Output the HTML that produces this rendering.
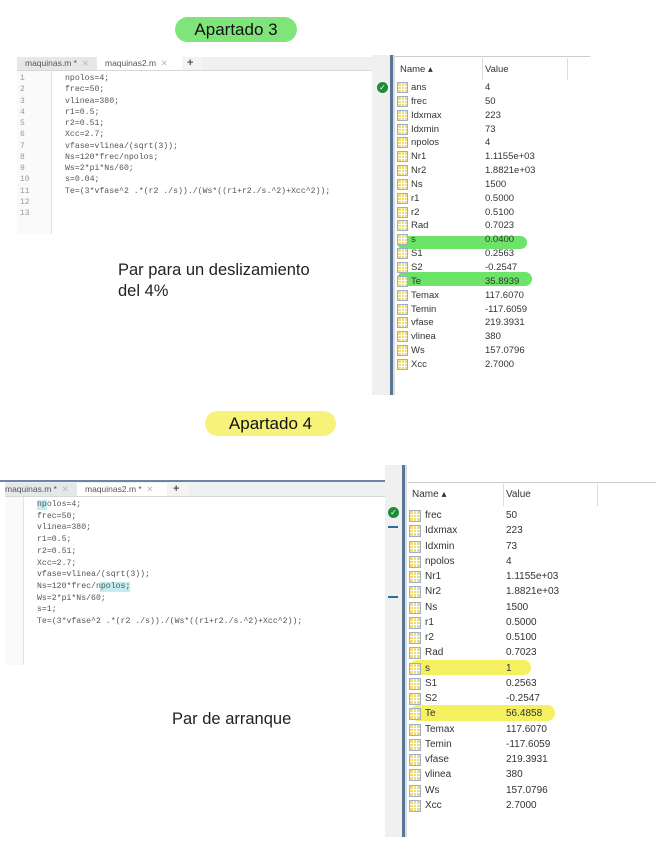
<!DOCTYPE html>
<html><head><meta charset="utf-8"><style>
*{margin:0;padding:0;box-sizing:border-box}
body{width:656px;height:848px;background:#fff;position:relative;overflow:hidden;font-family:"Liberation Sans",sans-serif}
.abs{position:absolute}
.pill{position:absolute;border-radius:14px;font-size:17px;color:#111;text-align:center}
.code{position:absolute;font-family:"Liberation Mono",monospace;font-size:8.2px;color:#555;white-space:pre}
.ln{position:absolute;font-family:"Liberation Mono",monospace;font-size:8px;color:#999;white-space:pre}
.tab{position:absolute;font-size:8.5px;color:#555;height:13px;line-height:13px;padding-left:8px}
.ws{position:absolute;font-size:9.5px;color:#333}
.row{position:relative;white-space:nowrap}
.ic{position:absolute;left:0;width:11px;height:11px;background:#f1dc7c;border:1px solid #9fb0c4;
background-image:linear-gradient(90deg,transparent 3px,#fff 3px,#fff 4px,transparent 4px,transparent 6px,#fff 6px,#fff 7px,transparent 7px),linear-gradient(180deg,transparent 3px,#fff 3px,#fff 4px,transparent 4px,transparent 6px,#fff 6px,#fff 7px,transparent 7px)}
.nm{position:absolute;left:14px}
.vl{position:absolute}
.chk{position:absolute;width:11px;height:11px;border-radius:50%;background:#1e8a3a;color:#fff;font-size:8px;line-height:11px;text-align:center}
</style></head><body>

<div class="pill" style="left:175px;top:17px;width:122px;height:25px;line-height:25px;background:#7fe57a">Apartado 3</div>

<div class="abs" style="left:17px;top:57px;width:358px;height:14px;background:#eef0f2;border-bottom:1px solid #d8d8d8"></div>
<div class="tab" style="left:17px;top:57px;width:80px;background:#e6e7e9">maquinas.m * &nbsp;<span style="color:#bbb">✕</span></div>
<div class="tab" style="left:97px;top:57px;width:85px;background:#fff">maquinas2.m &nbsp;<span style="color:#bbb">✕</span></div>
<div class="tab" style="left:182px;top:57px;width:20px;background:#f4f4f4;font-weight:bold;font-size:11px;padding-left:5px">+</div>
<div class="abs" style="left:17px;top:71px;width:35px;height:163px;background:#fafafa;border-right:1px solid #e2e2e2"></div>
<div class="ln" style="left:20px;top:73px;line-height:11.25px">1
2
3
4
5
6
7
8
9
10
11
12
13</div>
<div class="code" style="left:65px;top:73px;line-height:11.25px">npolos=4;
frec=50;
vlinea=380;
r1=0.5;
r2=0.51;
Xcc=2.7;
vfase=vlinea/(sqrt(3));
Ns=120*frec/npolos;
Ws=2*pi*Ns/60;
s=0.04;
Te=(3*vfase^2 .*(r2 ./s))./(Ws*((r1+r2./s.^2)+Xcc^2));</div>

<div class="abs" style="left:118px;top:260px;font-size:16.5px;line-height:21px;color:#222">Par para un deslizamiento<br>del 4%</div>

<div class="abs" style="left:372px;top:55px;width:20px;height:340px;background:#f0f0f0"></div>
<div class="abs" style="left:390px;top:55px;width:3px;height:340px;background:#5a7694"></div>
<div class="abs" style="left:393px;top:55px;width:2px;height:340px;background:#dcdcdc"></div>
<div class="chk" style="left:377px;top:82px">✓</div>
<div class="abs" style="left:395px;top:56px;width:195px;height:1px;background:#ccc"></div>
<div class="ws" style="left:400px;top:64px">Name ▴</div>
<div class="ws" style="left:485px;top:64px">Value</div>
<div class="abs" style="left:482px;top:58px;width:1px;height:22px;background:#ddd"></div>
<div class="abs" style="left:567px;top:58px;width:1px;height:22px;background:#ddd"></div>
<div class="abs" style="left:397px;top:236px;width:130px;height:13px;border-radius:7px;background:#6de36a"></div>
<div class="abs" style="left:397px;top:272px;width:135px;height:14px;border-radius:7px;background:#6de36a"></div>
<div class="ws" style="left:397px;top:81px;line-height:13.85px;width:180px">
<div class="row"><span class="ic" style="top:1px"></span><span class="nm">ans</span><span class="vl" style="left:88px">4</span>&nbsp;</div>
<div class="row"><span class="ic" style="top:1px"></span><span class="nm">frec</span><span class="vl" style="left:88px">50</span>&nbsp;</div>
<div class="row"><span class="ic" style="top:1px"></span><span class="nm">Idxmax</span><span class="vl" style="left:88px">223</span>&nbsp;</div>
<div class="row"><span class="ic" style="top:1px"></span><span class="nm">Idxmin</span><span class="vl" style="left:88px">73</span>&nbsp;</div>
<div class="row"><span class="ic" style="top:1px"></span><span class="nm">npolos</span><span class="vl" style="left:88px">4</span>&nbsp;</div>
<div class="row"><span class="ic" style="top:1px"></span><span class="nm">Nr1</span><span class="vl" style="left:88px">1.1155e+03</span>&nbsp;</div>
<div class="row"><span class="ic" style="top:1px"></span><span class="nm">Nr2</span><span class="vl" style="left:88px">1.8821e+03</span>&nbsp;</div>
<div class="row"><span class="ic" style="top:1px"></span><span class="nm">Ns</span><span class="vl" style="left:88px">1500</span>&nbsp;</div>
<div class="row"><span class="ic" style="top:1px"></span><span class="nm">r1</span><span class="vl" style="left:88px">0.5000</span>&nbsp;</div>
<div class="row"><span class="ic" style="top:1px"></span><span class="nm">r2</span><span class="vl" style="left:88px">0.5100</span>&nbsp;</div>
<div class="row"><span class="ic" style="top:1px"></span><span class="nm">Rad</span><span class="vl" style="left:88px">0.7023</span>&nbsp;</div>
<div class="row"><span class="ic" style="top:1px"></span><span class="nm">s</span><span class="vl" style="left:88px">0.0400</span>&nbsp;</div>
<div class="row"><span class="ic" style="top:1px"></span><span class="nm">S1</span><span class="vl" style="left:88px">0.2563</span>&nbsp;</div>
<div class="row"><span class="ic" style="top:1px"></span><span class="nm">S2</span><span class="vl" style="left:88px">-0.2547</span>&nbsp;</div>
<div class="row"><span class="ic" style="top:1px"></span><span class="nm">Te</span><span class="vl" style="left:88px">35.8939</span>&nbsp;</div>
<div class="row"><span class="ic" style="top:1px"></span><span class="nm">Temax</span><span class="vl" style="left:88px">117.6070</span>&nbsp;</div>
<div class="row"><span class="ic" style="top:1px"></span><span class="nm">Temin</span><span class="vl" style="left:88px">-117.6059</span>&nbsp;</div>
<div class="row"><span class="ic" style="top:1px"></span><span class="nm">vfase</span><span class="vl" style="left:88px">219.3931</span>&nbsp;</div>
<div class="row"><span class="ic" style="top:1px"></span><span class="nm">vlinea</span><span class="vl" style="left:88px">380</span>&nbsp;</div>
<div class="row"><span class="ic" style="top:1px"></span><span class="nm">Ws</span><span class="vl" style="left:88px">157.0796</span>&nbsp;</div>
<div class="row"><span class="ic" style="top:1px"></span><span class="nm">Xcc</span><span class="vl" style="left:88px">2.7000</span>&nbsp;</div>
</div>

<div class="pill" style="left:205px;top:411px;width:131px;height:25px;line-height:25px;background:#f7f27a">Apartado 4</div>

<div class="abs" style="left:0px;top:480px;width:400px;height:2px;background:#6b86a3"></div>
<div class="abs" style="left:5px;top:482px;width:380px;height:15px;background:#eef0f2;border-bottom:1px solid #d8d8d8"></div>
<div class="tab" style="left:5px;top:483px;width:72px;background:#e6e7e9;padding-left:0">maquinas.m * &nbsp;<span style="color:#bbb">✕</span></div>
<div class="tab" style="left:77px;top:483px;width:90px;background:#fff">maquinas2.m * &nbsp;<span style="color:#bbb">✕</span></div>
<div class="tab" style="left:167px;top:483px;width:22px;background:#f4f4f4;font-weight:bold;font-size:11px;padding-left:6px">+</div>
<div class="abs" style="left:5px;top:497px;width:19px;height:168px;background:#fafafa;border-right:1px solid #e2e2e2"></div>
<div class="abs" style="left:37px;top:500px;width:10px;height:10px;background:#c4ecef"></div>
<div class="abs" style="left:100px;top:582px;width:30px;height:10px;background:#c4ecef"></div>
<div class="code" style="left:37px;top:499px;line-height:11.7px">npolos=4;
frec=50;
vlinea=380;
r1=0.5;
r2=0.51;
Xcc=2.7;
vfase=vlinea/(sqrt(3));
Ns=120*frec/npolos;
Ws=2*pi*Ns/60;
s=1;
Te=(3*vfase^2 .*(r2 ./s))./(Ws*((r1+r2./s.^2)+Xcc^2));</div>

<div class="abs" style="left:172px;top:710px;font-size:16.5px;color:#222">Par de arranque</div>

<div class="abs" style="left:385px;top:465px;width:18px;height:372px;background:#f0f0f0"></div>
<div class="abs" style="left:402px;top:465px;width:3px;height:372px;background:#5a7694"></div>
<div class="abs" style="left:405px;top:465px;width:2px;height:372px;background:#dcdcdc"></div>
<div class="chk" style="left:388px;top:507px">✓</div>
<div class="abs" style="left:388px;top:526px;width:10px;height:2px;background:#2d6c95"></div>
<div class="abs" style="left:388px;top:596px;width:10px;height:2px;background:#2d6c95"></div>
<div class="abs" style="left:408px;top:482px;width:248px;height:1px;background:#ccc"></div>
<div class="ws" style="left:412px;top:489px;font-size:10px">Name ▴</div>
<div class="ws" style="left:506px;top:489px;font-size:10px">Value</div>
<div class="abs" style="left:503px;top:484px;width:1px;height:22px;background:#ddd"></div>
<div class="abs" style="left:597px;top:484px;width:1px;height:22px;background:#ddd"></div>
<div class="abs" style="left:410px;top:660px;width:121px;height:15px;border-radius:8px;background:#f5f060"></div>
<div class="abs" style="left:410px;top:705px;width:145px;height:16px;border-radius:8px;background:#f5f060"></div>
<div class="ws" style="left:409px;top:508px;line-height:15.25px;width:200px;font-size:10px">
<div class="row"><span class="ic" style="top:2px;width:12px;height:12px"></span><span class="nm" style="left:16px">frec</span><span class="vl" style="left:97px">50</span>&nbsp;</div>
<div class="row"><span class="ic" style="top:2px;width:12px;height:12px"></span><span class="nm" style="left:16px">Idxmax</span><span class="vl" style="left:97px">223</span>&nbsp;</div>
<div class="row"><span class="ic" style="top:2px;width:12px;height:12px"></span><span class="nm" style="left:16px">Idxmin</span><span class="vl" style="left:97px">73</span>&nbsp;</div>
<div class="row"><span class="ic" style="top:2px;width:12px;height:12px"></span><span class="nm" style="left:16px">npolos</span><span class="vl" style="left:97px">4</span>&nbsp;</div>
<div class="row"><span class="ic" style="top:2px;width:12px;height:12px"></span><span class="nm" style="left:16px">Nr1</span><span class="vl" style="left:97px">1.1155e+03</span>&nbsp;</div>
<div class="row"><span class="ic" style="top:2px;width:12px;height:12px"></span><span class="nm" style="left:16px">Nr2</span><span class="vl" style="left:97px">1.8821e+03</span>&nbsp;</div>
<div class="row"><span class="ic" style="top:2px;width:12px;height:12px"></span><span class="nm" style="left:16px">Ns</span><span class="vl" style="left:97px">1500</span>&nbsp;</div>
<div class="row"><span class="ic" style="top:2px;width:12px;height:12px"></span><span class="nm" style="left:16px">r1</span><span class="vl" style="left:97px">0.5000</span>&nbsp;</div>
<div class="row"><span class="ic" style="top:2px;width:12px;height:12px"></span><span class="nm" style="left:16px">r2</span><span class="vl" style="left:97px">0.5100</span>&nbsp;</div>
<div class="row"><span class="ic" style="top:2px;width:12px;height:12px"></span><span class="nm" style="left:16px">Rad</span><span class="vl" style="left:97px">0.7023</span>&nbsp;</div>
<div class="row"><span class="ic" style="top:2px;width:12px;height:12px"></span><span class="nm" style="left:16px">s</span><span class="vl" style="left:97px">1</span>&nbsp;</div>
<div class="row"><span class="ic" style="top:2px;width:12px;height:12px"></span><span class="nm" style="left:16px">S1</span><span class="vl" style="left:97px">0.2563</span>&nbsp;</div>
<div class="row"><span class="ic" style="top:2px;width:12px;height:12px"></span><span class="nm" style="left:16px">S2</span><span class="vl" style="left:97px">-0.2547</span>&nbsp;</div>
<div class="row"><span class="ic" style="top:2px;width:12px;height:12px"></span><span class="nm" style="left:16px">Te</span><span class="vl" style="left:97px">56.4858</span>&nbsp;</div>
<div class="row"><span class="ic" style="top:2px;width:12px;height:12px"></span><span class="nm" style="left:16px">Temax</span><span class="vl" style="left:97px">117.6070</span>&nbsp;</div>
<div class="row"><span class="ic" style="top:2px;width:12px;height:12px"></span><span class="nm" style="left:16px">Temin</span><span class="vl" style="left:97px">-117.6059</span>&nbsp;</div>
<div class="row"><span class="ic" style="top:2px;width:12px;height:12px"></span><span class="nm" style="left:16px">vfase</span><span class="vl" style="left:97px">219.3931</span>&nbsp;</div>
<div class="row"><span class="ic" style="top:2px;width:12px;height:12px"></span><span class="nm" style="left:16px">vlinea</span><span class="vl" style="left:97px">380</span>&nbsp;</div>
<div class="row"><span class="ic" style="top:2px;width:12px;height:12px"></span><span class="nm" style="left:16px">Ws</span><span class="vl" style="left:97px">157.0796</span>&nbsp;</div>
<div class="row"><span class="ic" style="top:2px;width:12px;height:12px"></span><span class="nm" style="left:16px">Xcc</span><span class="vl" style="left:97px">2.7000</span>&nbsp;</div>
</div>

</body></html>
